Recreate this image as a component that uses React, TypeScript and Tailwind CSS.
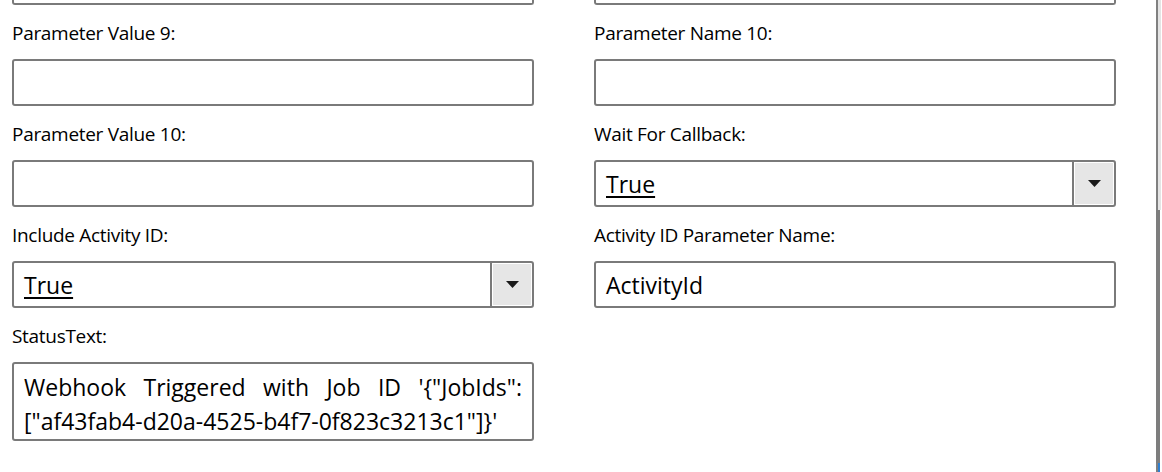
import type { ReactNode } from "react";

const FONT = { fontFamily: '"Open Sans", "Noto Sans", sans-serif' };

function Label({ children }: { children: ReactNode }) {
  return (
    <div className="h-[54px] pt-[14px] text-[19px] leading-[28px] tracking-[-0.3px] text-black">
      {children}
    </div>
  );
}

function TextBox({ value }: { value?: string }) {
  return (
    <div className="h-[47px] rounded-[3px] border-2 border-[#7a7a7a] bg-white pl-[10px] pt-[3px] text-[23px] leading-[39px] text-black">
      {value}
    </div>
  );
}

function ComboBox({ value }: { value: string }) {
  return (
    <div className="flex h-[47px] rounded-[3px] border-2 border-[#7a7a7a] bg-white text-[23px] leading-[39px] text-black">
      <div className="flex-1 pl-[10px] pt-[3px]">
        <span className="underline decoration-[1.5px] underline-offset-[3px]">{value}</span>
      </div>
      <div className="flex w-[42px] border-l-2 border-[#7a7a7a] p-px">
        <div className="flex flex-1 items-center justify-center bg-[#e6e6e6]">
          <svg width="13" height="7" viewBox="0 0 13 7">
            <path d="M0 0h13L6.5 7z" fill="#1a1a1a" />
          </svg>
        </div>
      </div>
    </div>
  );
}

export default function App() {
  return (
    <div className="flex h-[472px] w-[1162px] overflow-hidden bg-white" style={FONT}>
      <div className="w-[1156px] pl-[12px]">
        {/* tail of the row above */}
        <div className="grid grid-cols-[522px_522px] gap-x-[60px]">
          <div className="h-[5px] rounded-b-[3px] border-x-2 border-b-2 border-[#7a7a7a]" />
          <div className="h-[5px] rounded-b-[3px] border-x-2 border-b-2 border-[#7a7a7a]" />
        </div>

        <div className="grid grid-cols-[522px_522px] gap-x-[60px]">
          <div>
            <Label>Parameter Value 9:</Label>
            <TextBox />
          </div>
          <div>
            <Label>Parameter Name 10:</Label>
            <TextBox />
          </div>

          <div>
            <Label>Parameter Value 10:</Label>
            <TextBox />
          </div>
          <div>
            <Label>Wait For Callback:</Label>
            <ComboBox value="True" />
          </div>

          <div>
            <Label>Include Activity ID:</Label>
            <ComboBox value="True" />
          </div>
          <div>
            <Label>Activity ID Parameter Name:</Label>
            <TextBox value="ActivityId" />
          </div>

          <div>
            <Label>StatusText:</Label>
            <div className="h-[79px] rounded-[3px] border-2 border-[#7a7a7a] bg-white px-[10px] pt-[6px] text-[23px] leading-[34px] text-black">
              <div className="text-justify [text-align-last:justify]">
                Webhook Triggered with Job ID '{"{"}"JobIds":
              </div>
              <div>["af43fab4-d20a-4525-b4f7-0f823c3213c1"]{"}"}'</div>
            </div>
          </div>
          <div />
        </div>
      </div>

      {/* window edge / scrollbar */}
      <div className="flex w-[6px] flex-col">
        <div className="flex h-[210px]">
          <div className="w-[2px] bg-[#808080]" />
          <div className="w-[3px] bg-[#e4e4e4]" />
          <div className="w-[1px] bg-white" />
        </div>
        <div className="flex h-[253px]">
          <div className="w-[4px] bg-[#7d7d7d]" />
          <div className="w-[2px] bg-white" />
        </div>
        <div className="flex flex-1">
          <div className="w-[2px] bg-[#808080]" />
          <div className="w-[2px] bg-[#2f7fd0]" />
        </div>
      </div>
    </div>
  );
}
